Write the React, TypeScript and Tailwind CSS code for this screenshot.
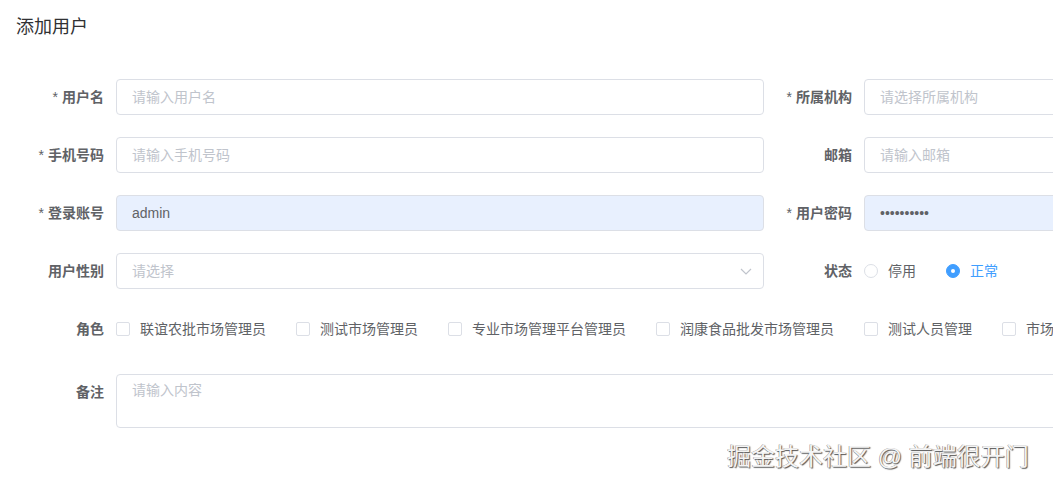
import React, { useState } from 'react';

const font = 'font-["Liberation_Sans","Noto_Sans_CJK_SC",sans-serif]';

const roles = ['联谊农批市场管理员', '测试市场管理员', '专业市场管理平台管理员', '润康食品批发市场管理员', '测试人员管理', '市场管理员'];

const Label = ({ text, required }: { text: string; required?: boolean }) => (
  <label className="w-[100px] shrink-0 pr-[12px] text-right text-[14px] font-bold text-[#606266] leading-[36px]">
    {required && <span className="mr-[4px] font-normal">*</span>}
    {text}
  </label>
);

const inputCls =
  'h-[36px] w-full rounded-[4px] border border-[#DCDFE6] px-[15px] text-[14px] text-[#606266] outline-none placeholder:text-[#C0C4CC]';

const Field = ({ label, required, children }: { label: string; required?: boolean; children: React.ReactNode }) => (
  <div className="flex h-[36px] items-center">
    <Label text={label} required={required} />
    <div className="flex-1">{children}</div>
  </div>
);

export default function App() {
  const [status, setStatus] = useState('1');
  const [checked, setChecked] = useState<string[]>([]);

  const toggle = (r: string) =>
    setChecked(c => (c.includes(r) ? c.filter(x => x !== r) : [...c, r]));

  return (
    <div className={`relative h-[486px] w-[1053px] overflow-hidden bg-white ${font}`}>
      <div className="px-[16px] pt-[15px] text-[18px] leading-[24px] text-[#303133]">添加用户</div>

      <form className="mt-[40px] w-[1512px] pl-[16px]">
        <div className="grid grid-cols-2 gap-y-[22px]">
          <Field label="用户名" required>
            <input className={inputCls} placeholder="请输入用户名" />
          </Field>
          <Field label="所属机构" required>
            <input className={inputCls} placeholder="请选择所属机构" readOnly />
          </Field>

          <Field label="手机号码" required>
            <input className={inputCls} placeholder="请输入手机号码" />
          </Field>
          <Field label="邮箱">
            <input className={inputCls} placeholder="请输入邮箱" />
          </Field>

          <Field label="登录账号" required>
            <input className={`${inputCls} bg-[#E8F0FE] text-[#303133]`} defaultValue="admin" />
          </Field>
          <Field label="用户密码" required>
            <input type="password" className={`${inputCls} bg-[#E8F0FE] text-[#303133]`} defaultValue="admin12345" />
          </Field>

          <Field label="用户性别">
            <div className="relative">
              <input className={`${inputCls} pr-[30px]`} placeholder="请选择" readOnly />
              <svg className="absolute right-[11px] top-[12px] h-[12px] w-[14px]" viewBox="0 0 14 12" fill="none">
                <path d="M2 4l5 5 5-5" stroke="#C0C4CC" strokeWidth="1.2" />
              </svg>
            </div>
          </Field>
          <Field label="状态">
            <div className="flex items-center text-[14px]">
              {[
                { v: '0', t: '停用' },
                { v: '1', t: '正常' },
              ].map(o => {
                const on = status === o.v;
                return (
                  <button
                    type="button"
                    key={o.v}
                    onClick={() => setStatus(o.v)}
                    className="mr-[30px] flex items-center"
                  >
                    <span
                      className={`flex h-[14px] w-[14px] items-center justify-center rounded-full border ${
                        on ? 'border-[#409EFF] bg-[#409EFF]' : 'border-[#DCDFE6] bg-white'
                      }`}
                    >
                      {on && <span className="h-[4px] w-[4px] rounded-full bg-white" />}
                    </span>
                    <span className={`pl-[10px] ${on ? 'text-[#409EFF]' : 'text-[#606266]'}`}>{o.t}</span>
                  </button>
                );
              })}
            </div>
          </Field>
        </div>

        <div className="mt-[22px] flex h-[36px] items-center">
          <Label text="角色" />
          <div className="flex items-center whitespace-nowrap text-[14px] text-[#606266]">
            {roles.map(r => (
              <button type="button" key={r} onClick={() => toggle(r)} className="mr-[30px] flex items-center">
                <span
                  className={`h-[14px] w-[14px] rounded-[2px] border ${
                    checked.includes(r) ? 'border-[#409EFF] bg-[#409EFF]' : 'border-[#DCDFE6] bg-white'
                  }`}
                />
                <span className="pl-[10px]">{r}</span>
              </button>
            ))}
          </div>
        </div>

        <div className="mt-[27px] flex items-start">
          <Label text="备注" />
          <textarea
            className="h-[54px] flex-1 resize-none rounded-[4px] border border-[#DCDFE6] px-[15px] py-[5px] text-[14px] leading-[21px] text-[#606266] outline-none placeholder:text-[#C0C4CC]"
            placeholder="请输入内容"
          />
        </div>
      </form>

      <div className="pointer-events-none absolute left-[727px] top-[441px] whitespace-nowrap text-[24px] leading-[32px] text-[#f4f4f4] [text-shadow:1px_1px_1px_#555,-0.5px_-0.5px_0.5px_#888]">
        掘金技术社区 @ 前端很开门
      </div>
    </div>
  );
}
